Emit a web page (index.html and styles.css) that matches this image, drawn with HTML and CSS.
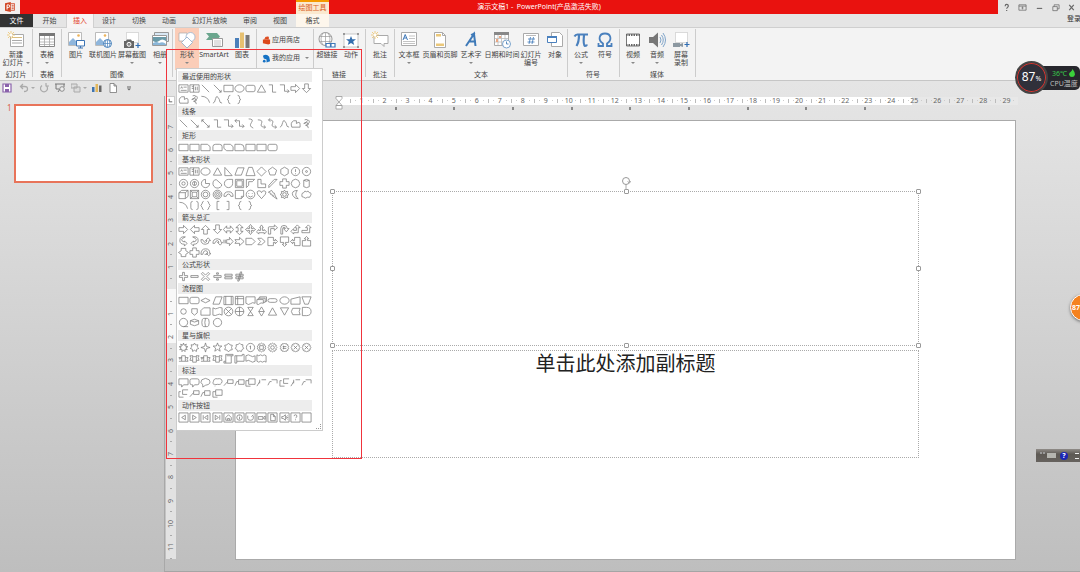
FILE: index.html
```html
<!DOCTYPE html>
<html lang="zh-CN">
<head>
<meta charset="utf-8">
<title>演示文稿1 - PowerPoint</title>
<link rel="stylesheet" href="styles.css">
</head>
<body>
<header class="titlebar">
  <div class="app-mark"><svg viewBox="0 0 12 12" class="icon-app"><path d="M0 1.5 7 0v12L0 10.5z" fill="#d24726"/><path d="M7 2h4.5v8H7M8 4h2.5M8 6h2.5M8 8h2.5" fill="none" stroke="#d24726"/><path d="M2.5 9V3.5h1.7a1.5 1.5 0 0 1 0 3H2.5" fill="none" stroke="#fff" stroke-width="1.2"/></svg></div>
  <div class="title-fill">
    <span class="context-title">绘图工具</span>
    <h1 class="doc-title">演示文稿1 -&nbsp; PowerPoint(产品激活失败)</h1>
  </div>
  <div class="window-buttons">
    <button aria-label="帮助"><svg viewBox="0 0 10 10"><path d="M3.5 3.5C3.5 1 7 1 7 3.3 7 5 5.2 4.8 5.2 6.5M5.2 7.7v1.2" stroke-width="1.3"/></svg></button>
    <button aria-label="功能区显示选项"><svg viewBox="0 0 10 10"><path d="M1 2h8v6H1zM1 3.5h8M5 7V4.6M3.8 5.6 5 4.5l1.2 1.1"/></svg></button>
    <button aria-label="最小化"><svg viewBox="0 0 10 10"><path d="M2 6h6" stroke-width="1.2"/></svg></button>
    <button aria-label="还原"><svg viewBox="0 0 10 10"><path d="M2 4h5v4.5H2zM3.5 4V2H9v4.5H7"/></svg></button>
    <button aria-label="关闭"><svg viewBox="0 0 10 10"><path d="m2.5 2 5 6M7.5 2l-5 6" stroke-width="1.3"/></svg></button>
  </div>
</header>

<nav class="tabs">
  <button class="tab tab-file">文件</button>
  <button class="tab tab-home">开始</button>
  <button class="tab tab-active">插入</button>
  <button class="tab">设计</button>
  <button class="tab">切换</button>
  <button class="tab">动画</button>
  <button class="tab">幻灯片放映</button>
  <button class="tab">审阅</button>
  <button class="tab">视图</button>
  <button class="tab tab-context">格式</button>
  <a class="sign-in" href="#">登录</a>
</nav>

<section class="ribbon">
  <div class="group">
    <div class="tools">
      <button class="tool w32"><svg viewBox="0 0 18 18"><path d="M3.5 3.5h13v12h-13z" fill="#fff" stroke="#aaa"/><path d="M5 6.5h10" stroke="#d9bd80"/><path d="M5 9.5h10M5 12h10" stroke="#aaa"/><path d="M4 0v8M0 4h8M1 1l6 6M7 1 1 7" stroke="#edc36a" stroke-width=".8"/><circle cx="4" cy="4" r="1.500" fill="#fff"/></svg><span>新建<br>幻灯片<i class="caret inline"></i></span></button>
    </div>
    <h2>幻灯片</h2>
  </div>
  <div class="group">
    <div class="tools">
      <button class="tool w28"><svg viewBox="0 0 18 18"><path d="M1.5 2.5h15v13h-15z" fill="#fff" stroke="#888"/><path d="M1 2h16v3H1z" fill="#777"/><path d="M2 8h14M2 11h14M2 13.5h14M6.5 5v10M11.5 5v10" stroke="#aaa" stroke-width=".8"/></svg><span>表格</span><i class="caret"></i></button>
    </div>
    <h2>表格</h2>
  </div>
  <div class="group">
    <div class="tools">
      <button class="tool w28"><svg viewBox="0 0 18 18"><path d="M1.500 1.500h13v13h-13z" fill="#fff" stroke="#bbb"/><circle cx="11.500" cy="4.500" r="1.300" fill="#edb35a"/><path d="M2 13v-2l4-4 5 5v2H2z" fill="#8fb6dc"/><path d="M9.500 9.500h8V15h-8z" fill="#fff" stroke="#3d75b5"/><path d="M13.500 15v2M11 17h5" stroke="#3d75b5"/></svg><span>图片</span></button>
      <button class="tool w26"><svg viewBox="0 0 18 18"><path d="M1.500 1.500h13v13h-13z" fill="#fff" stroke="#bbb"/><circle cx="11" cy="4.500" r="1.300" fill="#edb35a"/><path d="M2 13v-2l4-4 5 5v2H2z" fill="#8fb6dc"/><circle cx="13.500" cy="12.500" r="4" fill="#fff" stroke="#4580bb"/><path d="M9.500 12.500h8M13.500 8.500v8M12 9q-2 3.500 0 7M15 9q2 3.500 0 7" fill="none" stroke="#4580bb" stroke-width=".7"/></svg><span>联机图片</span></button>
      <button class="tool w32"><svg viewBox="0 0 18 18"><path d="M3.500 1.500h12v10h-12z" fill="#fff" stroke="#bbb" stroke-dasharray="1 1"/><path d="M1 10h2l1-1.500h4L9 10h2v7H1z" fill="#666"/><circle cx="6" cy="13.300" r="2" fill="#888" stroke="#fff"/><path d="M15 12v5M12.500 14.500h5" stroke="#2f6db3" stroke-width="1.200"/></svg><span>屏幕截图</span><i class="caret"></i></button>
      <button class="tool w24"><svg viewBox="0 0 18 18"><path d="M3.500 1.500h14v9h-14z" fill="#d8e8f5" stroke="#999"/><path d="M1.500 4.500h14v10h-14z" fill="#fff" stroke="#999"/><path d="M2 6h13v4q-4-3-7 0-3 2-6 0z" fill="#6a9aa8"/><path d="M2 12q4-2 6 0 4-2 7 1v1H2z" fill="#8ab6d8"/></svg><span>相册</span><i class="caret"></i></button>
    </div>
    <h2>图像</h2>
  </div>
  <div class="group group-pad">
    <div class="tools">
      <button class="tool w24 tool-open"><svg viewBox="0 0 18 18"><path d="M1 2h8v8H1z" fill="#fff" stroke="#aaa" stroke-width=".7"/><circle cx="12.500" cy="6" r="4.500" fill="#fff" stroke="#9bb4ce" stroke-width=".8"/><path d="m9 6 5.500 5.500L9 17l-5.500-5.500z" fill="#fff" stroke="#8caac8" stroke-width=".8"/></svg><span>形状</span><i class="caret"></i></button>
      <button class="tool w30"><svg viewBox="0 0 18 18"><path d="M1 2h11l3 3.500L12 9H1l3-3.500z" fill="#6ba68e"/><path d="M7.500 7.500h10v8h-10z" fill="#fff" stroke="#999"/><path d="M9 10h7M9 12h7M9 14h7" stroke="#aaa" stroke-width=".7"/></svg><span>SmartArt</span></button>
      <button class="tool w26"><svg viewBox="0 0 18 18"><path d="M2 7h4v10H2z" fill="#4a7fba"/><path d="M7 1.500h4V17H7z" fill="#e6c070"/><path d="M12.500 4h4v13h-4z" fill="#777"/></svg><span>图表</span></button>
    </div>
  </div>
  <div class="group apps">
    <button><svg viewBox="0 0 10 10"><path d="M1 4h8v4.500L7 9.500 1 8z" fill="#dc4a1d"/><path d="M3 4 4 1.500 7 1v3" fill="#dc4a1d" stroke="#dc4a1d"/></svg>应用商店</button>
    <button><svg viewBox="0 0 10 10"><path d="M1 2q4-3 7 1l1 5-4 1.500L5 6 2 5z" fill="#1672c4"/><circle cx="2.500" cy="8" r="1.500" fill="#1672c4"/></svg>我的应用<i class="caret inline"></i></button>
  </div>
  <div class="group group-one">
    <div class="tools">
      <button class="tool w24"><svg viewBox="0 0 18 18"><circle cx="7.500" cy="8" r="6.500" fill="#fff" stroke="#999"/><path d="M1 5.500h13M1 10.500h13M7.500 1.500v13M5 2q-4 6 0 12M10 2q4 6 0 12" fill="none" stroke="#999" stroke-width=".7"/><path d="M8 12.500h5V16H8zM12.500 12.500H17V16h-4.500z" fill="#fff" stroke="#3f78b8" stroke-width="1.200"/></svg><span>超链接</span></button>
      <button class="tool w24"><svg viewBox="0 0 18 18"><path d="M2 3h14v13H2z" fill="#fff" stroke="#bbb" stroke-width=".8"/><path d="M1 2h2v2H1zM15 2h2v2h-2zM1 15h2v2H1zM15 15h2v2h-2z" fill="#999"/><path d="m9 5 1.300 3.300H14l-2.800 2.200 1 3.500L9 12l-3.200 2 1-3.500L4 8.300h3.700z" fill="#356fae"/></svg><span>动作</span></button>
    </div>
    <h2>链接</h2>
  </div>
  <div class="group">
    <div class="tools">
      <button class="tool w28"><svg viewBox="0 0 18 18"><path d="M3 4.500h14v8h-4v3l-3-3H3z" fill="#fff" stroke="#aaa"/><path d="M4 0v8M0 4h8M1 1l6 6M7 1 1 7" stroke="#edc36a" stroke-width=".8"/><circle cx="4" cy="4" r="1.500" fill="#fff"/></svg><span>批注</span></button>
    </div>
    <h2>批注</h2>
  </div>
  <div class="group">
    <div class="tools">
      <button class="tool w28"><svg viewBox="0 0 18 18"><path d="M1.500 1.500h15v13h-15z" fill="#fff" stroke="#aaa"/><path d="m3 9 2.200-5.500L7.500 9M4 7h2.500" fill="none" stroke="#3f78b8"/><path d="M9 5h6M9 7.500h6M3 10.500h12M3 12.500h12" stroke="#aaa" stroke-width=".7"/></svg><span>文本框</span><i class="caret"></i></button>
      <button class="tool w34"><svg viewBox="0 0 18 18"><path d="M3.500 1.500h8l3 3v12h-11z" fill="#fff" stroke="#aaa"/><path d="M5 3h5v2.500H5zM5 12.500h8V15H5z" fill="#ebc87a"/><path d="M11.500 1.500v3h3" fill="none" stroke="#aaa"/></svg><span>页眉和页脚</span></button>
      <button class="tool w28"><svg viewBox="0 0 18 18"><path d="M4 15 12 3l1.500 12M7 10.500h7" fill="none" stroke="#3f7ab8" stroke-width="2"/><path d="m9 4 4-2" stroke="#3f7ab8" stroke-width="1.600"/></svg><span>艺术字</span><i class="caret"></i></button>
      <button class="tool w34"><svg viewBox="0 0 18 18"><path d="M1.500 1.500h14v13h-14z" fill="#fff" stroke="#aaa"/><path d="M1 1h15v3H1z" fill="#888"/><path d="M2 7.500h13M2 11h13M5 4v10M8.500 4v10M12 4v10" stroke="#bbb" stroke-width=".8"/><path d="M3 8h2v3H3zM6 5h2v2H6z" fill="#eba782"/><circle cx="13.500" cy="13" r="4" fill="#fff" stroke="#7aa3cc"/><path d="M13.500 10.500V13h2" fill="none" stroke="#5d8fc1"/></svg><span>日期和时间</span></button>
      <button class="tool w24"><svg viewBox="0 0 18 18"><path d="M1.500 2.500h15v12h-15z" fill="#fff" stroke="#aaa"/><path d="M4 4.500h10" stroke="#bbb"/><path d="m8.500 6-1.500 7M11.500 6 10 13M6 8h7M5.500 11h7" stroke="#3f78b8" stroke-width=".8"/></svg><span>幻灯片<br>编号</span></button>
      <button class="tool w24"><svg viewBox="0 0 18 18"><path d="M5.500 1.500h8l3 3v11h-11z" fill="#fff" stroke="#aaa"/><path d="M1.500 5.500h9v6h-9z" fill="#fff" stroke="#4a80bd"/><path d="M1 5h10v2H1z" fill="#4a80bd"/></svg><span>对象</span></button>
    </div>
    <h2>文本</h2>
  </div>
  <div class="group group-one">
    <div class="tools">
      <button class="tool w24"><svg viewBox="0 0 18 18"><path d="M2.500 5.500Q3.500 3.500 5.500 3.500H16M7 4q0 7-2.500 11M12 4q-1 10 1 11 1.500 0 2-1.500" fill="none" stroke="#4a80bd" stroke-width="2.200"/></svg><span>公式</span><i class="caret"></i></button>
      <button class="tool w24"><svg viewBox="0 0 18 18"><path d="M2.500 12v3H7v-2.500C1.500 9 3 2.500 9 2.500s7.500 6.500 2 10V15h4.500v-3" fill="none" stroke="#4a80bd" stroke-width="1.800"/></svg><span>符号</span></button>
    </div>
    <h2>符号</h2>
  </div>
  <div class="group group-one">
    <div class="tools">
      <button class="tool w24"><svg viewBox="0 0 18 18"><path d="M2.500 3h13v12h-13z" fill="#fff" stroke="#777"/><path d="M2 4h14M2 14h14" stroke="#666" stroke-width="2" stroke-dasharray="1.500 1"/></svg><span>视频</span><i class="caret"></i></button>
      <button class="tool w24"><svg viewBox="0 0 18 18"><path d="M1 6h4l5-4.500v15L5 12H1z" fill="#777"/><path d="M12 6q2 3 0 6M13.500 4q3.500 5 0 10M15 2q5 7 0 14" fill="none" stroke="#7fa4c9"/></svg><span>音频</span><i class="caret"></i></button>
      <button class="tool w24"><svg viewBox="0 0 18 18"><path d="M3.500 1.500h12v10h-12z" fill="#fff" stroke="#bbb" stroke-dasharray="1 1"/><path d="M1 12h7v4H1zM8 13l3-1v4l-3-1z" fill="#8c98a1"/><path d="M15 11v5M12.500 13.500h5" stroke="#2f6db3" stroke-width="1.200"/></svg><span>屏幕<br>录制</span></button>
    </div>
    <h2>媒体</h2>
  </div>
</section>

<main class="workspace">
  <aside class="side">
    <div class="quick">
      <button aria-label="保存"><svg viewBox="0 0 10 10"><path d="M1 1h8v8H1z" fill="#fff" stroke="#8a62ab" stroke-width="1.200"/><path d="M3 1h4v3H3zM3 6h4v3H3z" fill="#8a62ab"/></svg></button>
      <button aria-label="撤销"><svg viewBox="0 0 10 10"><path d="M1.500 3.500h4q3 0 3 2.500T5 8.500M4 1 1.500 3.500 4 6" fill="none" stroke="#aaa" stroke-width="1.300"/></svg><i class="caret"></i></button>
      <button aria-label="恢复"><svg viewBox="0 0 10 10"><path d="M7 2.500a3.500 3.500 0 1 1-4 0M7 0v3h3" fill="none" stroke="#aaa" stroke-width="1.200"/></svg></button>
      <button aria-label="从头开始"><svg viewBox="0 0 10 10"><path d="M0 1h10M1 1v5h3M9 1v3M3 9l2-3" fill="none" stroke="#777"/><circle cx="7" cy="6" r="2.300" fill="#eee" stroke="#777" stroke-width=".8"/></svg></button>
      <button aria-label="叠放"><svg viewBox="0 0 10 10"><path d="M0 1h6v4H0zM3 4h6v5H3z" fill="#ddd" stroke="#aaa"/></svg><i class="caret"></i></button>
      <button aria-label="图表"><svg viewBox="0 0 10 10"><path d="M0 4h2.500v5H0z" fill="#3f74b0"/><path d="M3.500 1H6v8H3.500z" fill="#e2b75c"/><path d="M7 2.500h2.500V9H7z" fill="#666"/></svg></button>
      <button aria-label="新建"><svg viewBox="0 0 10 10"><path d="M2 .5h4L8.500 3v6.500H2zM6 .5V3h2.500" fill="#fff" stroke="#777" stroke-width=".8"/></svg></button>
      <button aria-label="自定义"><svg viewBox="0 0 10 10"><path d="M3 4h4" stroke="#666"/><path d="M3 5.500h4L5 7.500z" fill="#666"/></svg></button>
    </div>
    <div class="thumbs">
      <span class="thumb-no">1</span>
      <div class="thumb"></div>
    </div>
  </aside>
  <div class="editor">
    <div class="corner"><svg viewBox="0 0 8 8"><path d="M2.500 2v3.500H6" fill="none" stroke="#555"/></svg></div>
    <div class="hruler">
      <div class="hscale" id="hscale"></div>
      <div class="stops" id="stops"></div>
      <svg class="indent" viewBox="0 0 8 14"><path d="M1 .5h6v2L4 6 1 2.500zM1 9.500 4 6l3 3.500zM1 9.500h6V13H1z" fill="#fff" stroke="#999" stroke-width=".8"/></svg>
    </div>
    <div class="vruler" id="vruler"></div>
    <div class="stage">
      <article class="slide">
        <div class="holder holder-title">
          <i class="handle tl"></i><i class="handle tc"></i><i class="handle tr"></i><i class="handle ml"></i><i class="handle mr"></i><i class="handle bl"></i><i class="handle bc"></i><i class="handle br"></i>
          <svg class="rotate" viewBox="0 0 10 14"><path d="M5 8v6" stroke="#aaa"/><circle cx="5" cy="5" r="3.500" fill="#fff" stroke="#999"/><path d="M6.500 5.500 8.500 7 10 5" fill="none" stroke="#999" stroke-width=".8"/></svg>
        </div>
        <div class="holder holder-sub">单击此处添加副标题</div>
      </article>
    </div>
  </div>
</main>

<div class="gallery" id="gallery"></div>
<div class="marker"></div>

<div class="cpu">
  <div class="cpu-dial">87<small>%</small></div>
  <div class="cpu-info"><span class="cpu-temp">36℃ <svg viewBox="0 0 6 8"><path d="M3.500 0Q6 3 6 5.500 5.500 8 3 8T0 5.500Q0 3.500 1.500 3 3 2 3.500 0z" fill="#3bd13b"/></svg></span><span>CPU温度</span></div>
</div>
<div class="ball">87</div>
<div class="langbar"><i class="grip"></i><i class="keys"></i><span class="help">?</span><i class="updown"></i></div>
<script src="script.js"></script>
</body>
</html>
```

FILE: styles.css
```css
* { box-sizing: border-box; }
body {
  margin: 0;
  height: 100vh;
  display: flex;
  flex-direction: column;
  position: relative;
  overflow: hidden;
  background: #e5e5e5;
  color: #444;
  font: 7px/8px "Noto Sans", "Noto Sans CJK SC", sans-serif;
}
button {
  font: inherit;
  color: inherit;
  background: none;
  border: 0;
  padding: 0;
  margin: 0;
}
h1, h2 { margin: 0; font: inherit; }
svg { display: block; }

/* title bar */
.titlebar { display: flex; height: 14px; flex: none; }
.app-mark { width: 20px; background: #f4efee; display: flex; justify-content: center; align-items: center; }
.icon-app { width: 10px; height: 10px; }
.title-fill { flex: 1; background: #e9120f; display: grid; align-items: center; }
.context-title {
  grid-area: 1 / 1;
  margin-left: 276px;
  width: 33px;
  height: 14px;
  line-height: 12px;
  text-align: center;
  background: #fbe9cf;
  border-top: 2px solid #f59a00;
  color: #d9601c;
}
.doc-title { grid-area: 1 / 1; justify-self: center; margin-left: 60px; color: #fff; white-space: nowrap; }
.window-buttons { display: flex; width: 82px; }
.window-buttons button { flex: 1; display: flex; justify-content: center; align-items: center; }
.window-buttons svg { width: 9px; height: 9px; fill: none; stroke: #666; stroke-width: .8; }

/* tabs */
.tabs { display: flex; flex: none; height: 14px; border-bottom: 1px solid #cfcfcf; }
.tab { padding: 0 8px; white-space: nowrap; }
.tab-file { width: 33px; background: #333; color: #fff; }
.tab-home { width: 33px; }
.tab-active { width: 28px; padding: 0; background: #f7f5f5; border: solid #d0d0d0; border-width: 0 1px; color: #e2401f; margin-bottom: -1px; }
.tab-context { width: 33px; margin-left: 1px; background: #fdf6ec; }
.sign-in { margin-left: auto; margin-right: -1px; line-height: 9px; color: #333; text-decoration: none; }

/* ribbon */
.ribbon { display: flex; flex: none; height: 53px; background: #f3f3f3; border-bottom: 1px solid #c6c6c6; }
.group { display: flex; flex-direction: column; justify-content: space-between; position: relative; padding: 2px 1px 1px 0; }
.group::after { content: ""; position: absolute; right: 0; top: 1px; bottom: 3px; width: 1px; background: #ccc; }
.group-pad { padding: 0 2px; }
.group-one { padding-left: 1px; padding-right: 3px; }
.group h2 { text-align: center; line-height: 9px; }
.tools { display: flex; }
.tool { display: flex; flex-direction: column; align-items: center; padding-top: 1px; white-space: nowrap; }
.tool svg { width: 18px; height: 18px; margin-bottom: 2px; }
.tool-open { background: #fbcdb8; height: 42px; }
.group-pad .tool { padding-top: 3px; }
.w24 { width: 24px; }
.w26 { width: 26px; }
.w28 { width: 28px; }
.w30 { width: 30px; }
.w32 { width: 32px; }
.w34 { width: 34px; }
.caret { display: block; margin-top: 3px; border: solid transparent; border-width: 2px 2px 0; border-top-color: #888; }
.caret.inline { display: inline-block; margin: 0 0 1px 2px; }
.apps { width: 57px; padding: 7px 0 0 5px; justify-content: flex-start; gap: 8px; }
.apps button { display: flex; align-items: center; height: 10px; gap: 1px; white-space: nowrap; }
.apps svg { width: 9px; height: 9px; }
.apps .caret { margin-left: 4px; }

/* workspace */
.workspace { flex: 1; min-height: 0; display: grid; grid-template-columns: 164px 1fr; background: linear-gradient(#e5e5e5, #e2e2e2 10%, #bebebe); }
.quick { display: flex; padding: 2px 0 0 2px; height: 16px; }
.quick button { display: flex; align-items: center; height: 10px; width: 16px; }
.quick button:nth-child(1) { width: 17px; }
.quick button:nth-child(2) { width: 20px; }
.quick button:nth-child(5) { width: 21px; }
.quick svg { width: 10px; height: 10px; }
.quick .caret { margin: 0 0 0 2px; border-top-color: #aaa; }
.thumbs { display: flex; gap: 2px; padding: 7px 11px 0 7px; }
.thumb-no { width: 5px; color: #d9604a; font-size: 8px; }
.thumb { flex: 1; aspect-ratio: 139 / 79; background: #fff; border: 2px solid #e8745a; }

.editor {
  display: grid;
  grid-template: 30px 1fr / 12px 1fr;
  border-bottom: 1px solid #a5a5a5;
  position: relative;
}
.editor::before { content: ""; position: absolute; left: 0; top: 15px; bottom: 0; width: 1px; background: #a8a8a8; }
.corner { width: 9px; height: 9px; margin: 15px 0 0 2px; background: #fff; border: 1px solid #ccc; }
.hruler { position: relative; padding-top: 16px; }
.hscale { display: flex; height: 8px; margin: 0 62px 0 174px; background: linear-gradient(90deg, #fff 562px, #e8e8e8 562px); position: relative; }
.hscale::before { content: ""; position: absolute; right: 100%; width: 11px; height: 8px; background: #fff; }
.hscale span { flex: 1; position: relative; text-align: center; color: #666; }
.hscale span::before { content: ""; position: absolute; left: 0; top: 2px; width: 1px; height: 4px; background: #bbb; }
.hscale span::after { content: ""; position: absolute; left: 5px; right: 4px; top: 3px; height: 1px; border: solid #ccc; border-width: 0 1px; }
.stops { display: flex; margin: 2px 214px 0 162px; }
.stops span { flex: 1; height: 3px; border-right: 2px solid #888; }
.indent { position: absolute; left: 159px; top: 15px; width: 8px; height: 14px; }
.vruler { margin: 4px 0 12px 2px; width: 10px; background: linear-gradient(#e4e4e4 174px, #f8f8f8 174px, #f8f8f8 228px, #e2e2e2 228px); display: flex; flex-direction: column; }
.vruler span { flex: 1; position: relative; display: flex; align-items: center; justify-content: center; color: #666; }
.vruler b { font-weight: 400; writing-mode: vertical-rl; transform: rotate(180deg); line-height: 8px; }
.vruler span::after { content: ""; position: absolute; left: 4px; bottom: 0; width: 2px; height: 1px; background: #aaa; }
.stage { display: flex; padding: 9px 64px 11px 59px; }
.slide { flex: 1; display: flex; flex-direction: column; gap: 4px; background: #fff; border: 1px solid #aaa; padding: 70px 96px 0; }
.holder { border: 1px dotted #aaa; position: relative; }
.holder-title { flex: 154; }
.holder-sub { flex: 107; text-align: center; color: #222; font: 20px/24px "Noto Sans CJK SC", sans-serif; }
.slide::after { content: ""; flex: 98; }
.handle { position: absolute; width: 5px; height: 5px; background: #fff; border: 1px solid #999; border-radius: 1px; }
.tl, .tc, .tr { top: -3px; }
.bl, .bc, .br { bottom: -3px; }
.tl, .ml, .bl { left: -3px; }
.tr, .mr, .br { right: -3px; }
.tc, .bc { left: calc(50% - 2px); }
.ml, .mr { top: calc(50% - 2px); }
.rotate { position: absolute; width: 10px; height: 14px; left: calc(50% - 5px); top: -16px; }

/* shape gallery */
.gallery {
  position: absolute;
  left: 176px;
  top: 68px;
  width: 147px;
  height: 363px;
  padding: 2px 10px 6px 1px;
  display: flex;
  flex-direction: column;
  background: #fff;
  border: 1px solid #ccc;
}
.gallery::after { content: ""; position: absolute; right: 1px; bottom: 1px; width: 4px; height: 4px; border: dotted #999; border-width: 0 1px 1px 0; }
.shape-set { display: flex; flex-direction: column; }
.shape-set h2 { height: 11px; line-height: 11px; margin-bottom: 1px; padding-left: 4px; background: #ededed; }
.shape-grid { flex: 1; display: grid; grid-template-columns: repeat(12, 1fr); align-items: center; padding-bottom: 1px; }
.shape-grid svg { width: 11px; height: 11px; fill: none; stroke: #777; stroke-width: .8; }

/* overlays */
.marker { position: absolute; left: 166px; top: 49px; width: 196px; height: 410px; border: 1px solid #f0343c; pointer-events: none; }
.cpu { position: absolute; right: 0; top: 61px; display: flex; align-items: center; }
.cpu-dial {
  width: 33px;
  height: 33px;
  border-radius: 50%;
  background: #30303a;
  border: 2px solid #444;
  box-shadow: inset 0 0 0 1px #d8352f;
  color: #fff;
  font-size: 12px;
  line-height: 28px;
  text-align: center;
  z-index: 1;
}
.cpu-dial small { font-size: 7px; }
.cpu-info { margin-left: -6px; width: 38px; height: 24px; padding: 3px 0 0 8px; display: flex; flex-direction: column; gap: 1px; background: #27272d; border-radius: 0 5px 5px 0; color: #bbb; white-space: nowrap; line-height: 9px; }
.cpu-temp { display: flex; gap: 2px; padding-left: 2px; color: #37c84a; }
.cpu-temp svg { width: 6px; height: 8px; }
.ball { position: absolute; right: -17px; top: 294px; width: 27px; height: 27px; border-radius: 50%; background: #f5821f; border: 1px solid #fff; box-shadow: 0 1px 3px #777; color: #fff; font-weight: 700; line-height: 25px; padding-left: 1px; }
.langbar { position: absolute; right: 0; top: 449px; width: 44px; height: 13px; display: flex; align-items: center; gap: 4px; padding-left: 4px; background: linear-gradient(#908c88, #5d5954 40%, #66625e); }
.grip { width: 3px; height: 7px; border-top: 2px dotted #999; }
.keys { width: 9px; height: 5px; background: #b5b5b0; }
.help { width: 8px; height: 8px; border-radius: 50%; background: #1c26b4; color: #fff; text-align: center; font-weight: 700; }
.updown { width: 4px; height: 6px; margin-left: 3px; border: solid #eee; border-width: 1px 0; }
```

FILE: script.js
```js
const circle = (r, x = 6, y = 6) => `M${x - r} ${y}a${r} ${r} 0 1 0 ${2 * r} 0a${r} ${r} 0 1 0 ${-2 * r} 0z`;
const star = (n, outer, inner) => {
  let d = "";
  for (let i = 0; i < n * 2; i++) {
    const r = i % 2 ? inner : outer;
    const a = Math.PI * i / n - Math.PI / 2;
    d += (i ? "L" : "M") + (6 + r * Math.cos(a)).toFixed(2) + " " + (6 + r * Math.sin(a)).toFixed(2);
  }
  return d + "z";
};
const polygon = n => {
  let d = "";
  for (let i = 0; i < n; i++) {
    const a = Math.PI * 2 * i / n - Math.PI / 2;
    d += (i ? "L" : "M") + (6 + 4.7 * Math.cos(a)).toFixed(2) + " " + (6 + 4.7 * Math.sin(a)).toFixed(2);
  }
  return d + "z";
};
const box = "M1 1h10v10H1z";

const shapes = {
  textbox: "M1 2h10v8H1zM3 6l1-2 1 2M6 4.500h3.500M3 8h6.500",
  vtextbox: "M1 2h10v8H1zM9 4v4M7 4v4M3 4h2M3 6h2M5 2v8",
  line: "M2 2l8 8", arrowline: "M2 2l8 8M7.500 10H10V7.500", dblline: "M2 2l8 8M7.500 10H10V7.500M2 4.500V2h2.500",
  rect: "M1 2.500h10v7H1z", oval: "M1 6a5 4 0 1 0 10 0a5 4 0 1 0-10 0z",
  round: "M3 2.500h6q2 0 2 2v3q0 2-2 2H3q-2 0-2-2v-3q0-2 2-2z",
  triangle: "M6 2l4.500 8h-9z", elbow: "M2 2h4v8h4", elbowarrow: "M1 2h5v7h5M9 7l2 2-2 2", elbowdbl: "M1 3h5v6h5M9 7l2 2-2 2M3 1L1 3l2 2",
  right: "M1 4h5V1.500L10.500 6 6 10.500V8H1z", left: "M11 4H6V1.500L1.500 6 6 10.500V8h5z",
  down: "M4 1v5H1.500L6 10.500 10.500 6H8V1z", up: "M4 11V6H1.500L6 1.500 10.500 6H8v5z",
  freeform: "M2 10q-2-5 2-7h3v3q4-3 4 1v3z", scribble: "M4 2q4-1 3 1T3 6q4-2 5 0T5 8q3 0 3 3M8 2q3 3-2 5",
  arc: "M1.500 2.500q7 0 9 7", curve: "M1 10q2 0 3-5t4 1q0 4 3 4",
  lbrace: "M8 1.500q-2 0-2 2V5L4.500 6 6 7v1.500q0 2 2 2", rbrace: "M4 1.500q2 0 2 2V5l1.500 1L6 7v1.500q0 2-2 2",
  ccurve: "M4 1q6 0 3 4t2 6", ccurvearrow: "M2 2q6 0 4 4t4 4M8.500 8l2 2-2 1.500", ccurvedbl: "M2 2q6 0 4 4t4 4M8.500 8l2 2-2 1.500M3.500.5 1.500 2l2 2",
  snip1: "M1 2.500h7L11 5v4.500H1z", roundtop: "M1 9.500V5q0-2.500 3-2.500h4q3 0 3 2.500v4.500z",
  snipdiag: "M1 2.500h7L11 5v4.500H4L1 7z", round1: "M1 2.500h6q4 0 4 4v3H1z",
  rtri: "M2 1.500v9h8z", para: "M4 2h7L8 10H1z", trap: "M4 1.500h4l3 9H1z", diamond: "M6 1l5 5-5 5-5-5z",
  penta: polygon(5), hexa: polygon(6), hepta: polygon(7), octa: polygon(8),
  circle: circle(4.5), circledot: circle(4.5) + circle(1), circlebang: circle(4.5) + "M6 3.500v3M6 8v1",
  circle8: circle(4.5) + circle(1.8), circle12: circle(4.5) + circle(2.2) + "M6 4v4",
  pie: "M6 1.500A4.500 4.500 0 1 0 10.500 6H6z", chord: "M3 2a4.700 4.700 0 0 0 6 8q2-1 1.500-3L5 2z", tear: "M6 1.500h4.500V6A4.500 4.500 0 1 1 6 1.500z",
  frame: "M1.500 1.500h9v9h-9zM3 3h6v6H3z", half: "M1.500 1.500h9L8 4H4v4l-2.500 2.500z", ell: "M2 1.500h3.500v5h5v4H2z",
  stripe: "M2 10.500V8l6-6.500h3z", cross: "M4 1h4v3h3v4H8v3H4V8H1V4h3z", can: "M3 2.500q3-2 6 0v7q-3 2-6 0zM3 2.500q3 2 6 0",
  cube: "M1 4l3-2.500h7V8l-3 2.500H1zM1 4h7v6.500M8 4l3-2.500", bevel: "M1.500 1.500h9v9h-9zM3.500 3.500h5v5h-5zM1.500 1.500l2 2M10.500 1.500l-2 2M1.500 10.500l2-2M10.500 10.500l-2-2",
  donut: circle(4.6) + circle(2.6), nosign: circle(4.7) + circle(3) + circle(1.2),
  block: "M1 8Q1 3 6 3t5 5H8.500Q8 5.500 6 5.500T3.500 8z", fold: "M1.500 1.500h9V8L8 10.500H1.500zM8 10.500V8h2.500",
  smile: circle(4.7) + "M4 4.500v.8M8 4.500v.8M3.500 7.500q2.500 2.500 5 0", heart: "M6 10.500L2 6Q0 2 3.500 2 5.500 2 6 4 6.500 2 8.500 2 12 2 10 6z",
  bolt: "M1.500 3.500L5 1.500l2 3h1l1 3 2 3.500-5-3.500 1-.5L4 6l.5-1z", sun: star(8, 4.8, 3.2) + circle(2), moon: "M8 1.500Q1 2 3 7q2 4 6 3.500Q4 7 8 1.500z",
  cloud: "M3 4q1-3 3-1 2-2 3 1 3 0 1.500 3Q10 10 7 9q-2 2-4 0-3 0-2-3 0-2 2-2z",
  dblbracket: "M4 1.500q-2 0-2 2v5q0 2 2 2M8 1.500q2 0 2 2v5q0 2-2 2", dblbrace: "M4 1.500q-1.500 0-1.500 2L1 6l1.500 2.500q0 2 1.500 2M8 1.500q1.500 0 1.500 2L11 6 9.500 8.500q0 2-1.500 2",
  lbracket: "M8 1.500H5.500v9H8", rbracket: "M4 1.500h2.500v9H4",
  leftright: "M.5 6L4 2v2.500h4V2l3.500 4L8 10V7.500H4V10z", updown: "M6 .5L10 4H7.500v4H10l-4 3.500L2 8h2.500V4H2z",
  quad: "M6 .5L8 3H7v2h2V4l2.500 2L9 8V7H7v2h1l-2 2.500L4 9h1V7H3v1L.5 6 3 4v1h2V3H4z", tri: "M6 1l2 3H7v3h2V6l2.500 2.500L9 11v-1.500H3V11L.5 8.500 3 6v1h2V4H4z",
  bent: "M1.500 11V4q0-1 1-1H8V1l3.500 3L8 7V5H4v6z", uturn: "M2 11V5q0-3.500 3.500-3.500T9 5h2L8 8.500 5 5h2q0-1.500-1.500-1.500T4 5v6z",
  leftup: "M1 8l3-3v2h3V4H5l3-3 3 3H9v5.500H4V11z", bentup: "M1 7h6V4H5l3-3 3 3H9.500v5.500H1z",
  curveright: "M8 1Q2 0 2 5q0 4 5 4V11l3-3-3-2.500v1Q4 6 4 4 5 2 8 1z", curveleft: "M4 1q6-1 6 4 0 4-5 4v2L2 8l3-2.500v1Q8 6 8 4 7 2 4 1z",
  curveup: "M1 4q0 5 5 5 4 0 4-4h1.500L9 2 6 5h1.500Q7 7 6 7 4 7 3 4z", curvedown: "M1 8q0-5 5-5 4 0 4 4h1.500L9 10 6 7h1.500Q7 5 6 5 4 5 3 8z",
  striped: "M1 4v4M2.500 4v4M4 4h3V1.500L11 6 7 10.500V8H4z", notched: "M1 4h5V1.500L11 6 6 10.500V8H1l1.500-2z", home: "M1 2.500h6.500L11 6 7.500 9.500H1z", chevron: "M2 2.500h4L10 6 6 9.500H2L5 6z",
  callright: "M1 1.500h6V5h2V3.500L11.500 6 9 8.500V7H7v3.500H1z", calldown: "M1.500 1h9v6H7v2h1.500L6 11.500 3.500 9H5V7H1.500z", callleft: "M11 1.500H5V5H3V3.500L.5 6 3 8.500V7h2v3.500h6z", callup: "M1.500 11h9V5H7V3h1.500L6 .5 3.500 3H5v2H1.500z",
  calllr: "M3.500 1.500h5V4l3 2-3 2v2.500h-5V8l-3-2 3-2z", circular: "M1 8q0-6 5-6t4.500 5H12L9.500 9.500 7 7h1.500Q8.500 4 6 4T3 8zM5 8h3",
  plus: "M5 1.500h2V5h3.500v2H7v3.500H5V7H1.500V5H5z", minus: "M2 5h8v2H2z", times: "M3 1.500l3 3 3-3L10.500 3l-3 3 3 3L9 10.500l-3-3-3 3L1.500 9l3-3-3-3z", divide: "M2 5h8v2H2zM5 2h2v1.500H5zM5 8.500h2V10H5z", equal: "M2 3.500h8v2H2zM2 6.500h8v2H2z", notequal: "M2 3.500h8v2H2zM2 6.500h8v2H2zM4 11l3-10h1.500l-3 10z",
  flat: "M6 3.500l5 2.500-5 2.500L1 6z", predefined: "M1 1.500h10v9H1zM3 1.500v9M9 1.500v9", internal: "M1.500 1.500h9v9h-9zM4 1.500v9M1.500 4h9", doc: "M1 2h10v7q-3-1.500-5 .5T1 9z", multidoc: "M1 5h7v4q-3-1-4 .5T1 10zM2.500 5V3.500H10V8H8M4 3.500V2h7.500v5H10", term: "M3.500 4h5q2.500 0 2.500 2T8.500 8h-5Q1 8 1 6t2.500-2z", manual: "M1 4.500L11 2v8H1z", manualop: "M1 2h10l-3 8H4z",
  dot: circle(3), offpage: "M3 3h6v4.500L6 10 3 7.500z", card: "M4 2h7v8H1V5z", tape: "M1 2q3 2 5 .5T11 2v8q-3-2-5-.5T1 10z", sum: circle(4.7) + "M2.700 2.700l6.600 6.600M9.300 2.700L2.700 9.300", or: circle(4.7) + "M6 1.300v9.400M1.300 6h9.400", collate: "M3 1.500h6l-6 9h6z", sort: "M6 1l3 5-3 5-3-5zM3 6h6", invtri: "M1.500 2h9L6 10z", stored: "M3 2.500h8q-2 3.500 0 7H3q-3-3.500 0-7z", delay: "M1.500 1.500H6q5 0 5 4.500t-5 4.500H1.500z",
  seq: circle(4.5) + "M6 10.500h5", disk: "M1.500 4q4.500-3 9 0v4q-4.500 3-9 0zM1.500 4q4.500 3 9 0", drum: "M4 1.500h4q2 0 2 4.500t-2 4.500H4Q2 10.500 2 6t2-4.500zM6 1.500q-1.500 4.500 0 9",
  boom1: star(9, 4.8, 2.6), boom2: star(7, 4.8, 3), star4: star(4, 5, 1.6), star5: star(5, 5, 2.1), star6: star(6, 4.8, 3.3), star7: star(7, 4.8, 3.6),
  star8: circle(4.5) + "M6 4v4M5 5h1", star10: star(10, 4.8, 4) + "M4 4h4v4H4z", star12: star(12, 4.8, 4) + circle(2), star16: star(14, 4.8, 4) + "M4 5h4M4 7h4M5 4v4", star24: star(16, 4.8, 4.1) + "M4 4l4 4M8 4L4 8",
  ribbonup: "M1 9h3V3h4v6h3L10 7l1-2H8M4 5H1l1 2zM4 9h4", ribbondown: "M1 3h3l1 1h2l1-1h3l-1 2 1 3H8v2H4V8H1l1-3zM4 3v5M8 3v5",
  vscroll: "M3 1.500h8V3H9v8H1V9h2zM3 9v2M4 3h5", hscroll: "M1 3h8V1.500h2V9H3v2H1zM3 3v6", wave: "M1 3q3-2 5 0t5 0v6q-3 2-5 0T1 9z", dblwave: "M1 2l2 1 2-1 2 1 2-1 2 1v7l-2-1-2 1-2-1-2 1-2-1z",
  call1: "M1 2h10v6.500H6L4 11V8.500H1z", call2: "M3 2h6q2 0 2 2v2.500q0 2-2 2H6L4 11V8.500H3q-2 0-2-2V4q0-2 2-2z", call3: "M3 8.500Q-.5 6 2 3q4-3 8 0 3 5-4 6L3 11z", call4: "M3 8Q0 8 1.500 5 2 1 6 2q5-1 5 3-1 4-5 3l-3 .5M3 10h.5",
  lc1: "M5 3h6v4H5zM5 5L1 9.500", lc2: "M5 3h6v5H5zM5 5H3L1 9.500", lc3: "M4 2h7v6H4zM4 4H1v6h5", lc4: "M4 3v4M6 3h5M4 5L1 10", lc5: "M5 3h6M11 3v4M5 5H3L1 9", lc6: "M5 2h6M5 2v5h5M3 4H1v6h5"
};
const glyphs = {
  back: "M8 3.500v5L4 6z", forward: "M4 3.500v5L8 6z", first: "M8.500 3.500v5L5 6zM3.500 3.500v5", last: "M3.500 3.500v5L7 6zM8.500 3.500v5",
  home: "M3 6l3-3 3 3v3H3zM5 9V7h2v2", info: circle(3) + "M6 5v3M6 3.500v.6", ret: "M3 4v3q0 2 3 2t3-2V4M7 5l2-2", movie: "M2.500 5h5v3h-5zM8 6l2-1.500V8L8 7", paper: "M4 2.500h3L9 5v4.500H4zM7 2.500V5h2", sound: "M3 5h1.500L7 3v6L4.500 7H3zM8 5l1.500-1M8 6h2M8 7l1.500 1", help: "M4.500 4.500Q4.500 3 6 3t1.500 1.500T6 6.500M6 8v1", blank: ""
};
for (const key in glyphs) shapes["act-" + key] = box + glyphs[key];

const sets = [
  ["最近使用的形状", 2, "textbox vtextbox line arrowline rect oval round triangle elbow elbowarrow right down freeform scribble arc curve lbrace rbrace"],
  ["线条", 1, "line arrowline dblline elbow elbowarrow elbowdbl ccurve ccurvearrow ccurvedbl curve freeform scribble"],
  ["矩形", 1, "rect rect snip1 roundtop snipdiag round1 rect rect round"],
  ["基本形状", 4, "textbox vtextbox oval triangle rtri para trap diamond penta hexa circlebang circledot circle8 circle12 pie chord tear frame half ell stripe cross octa can cube bevel donut nosign block fold smile heart bolt sun moon cloud arc dblbracket dblbrace lbracket rbracket lbrace rbrace"],
  ["箭头总汇", 3, "right left up down leftright updown quad tri bent uturn leftup bentup curveright curveleft curveup curvedown striped notched home chevron callright calldown callleft callup calllr cross circular"],
  ["公式形状", 1, "plus minus times divide equal notequal"],
  ["流程图", 3, "rect round flat para predefined internal doc multidoc term oval manual manualop dot offpage card tape sum or collate sort triangle invtri stored delay seq disk drum circle"],
  ["星与旗帜", 2, "boom1 boom2 star4 star5 star6 star7 star8 star10 star12 star16 star24 star24 ribbonup ribbondown ribbonup ribbondown vscroll hscroll wave dblwave"],
  ["标注", 2, "call1 call2 call3 call4 lc1 lc2 lc3 lc4 lc5 lc6 lc4 lc5 lc6 lc1 lc2 lc3"],
  ["动作按钮", 1, "act-back act-forward act-first act-last act-home act-info act-ret act-movie act-paper act-sound act-help act-blank"]
];
document.getElementById("gallery").innerHTML = sets.map(([name, rows, list]) =>
  `<section class="shape-set" style="flex:${rows * 23 + 25} 0 0"><h2>${name}</h2><div class="shape-grid">` +
  list.split(" ").map(key => `<button aria-label="${key}"><svg viewBox="0 0 12 12"><path d="${shapes[key]}"/></svg></button>`).join("") +
  "</div></section>").join("");

document.getElementById("hscale").innerHTML = Array.from({ length: 29 }, (_, i) => `<span>${i + 1}</span>`).join("");
document.getElementById("stops").innerHTML = "<span></span>".repeat(9);
document.getElementById("vruler").innerHTML = [7, 6, 5, 4, 3, 2, 1, "", 1, 2, 3, 4, 5, 6, 7, 8, 9, 10, 11].map(n => `<span><b>${n}</b></span>`).join("");
```
